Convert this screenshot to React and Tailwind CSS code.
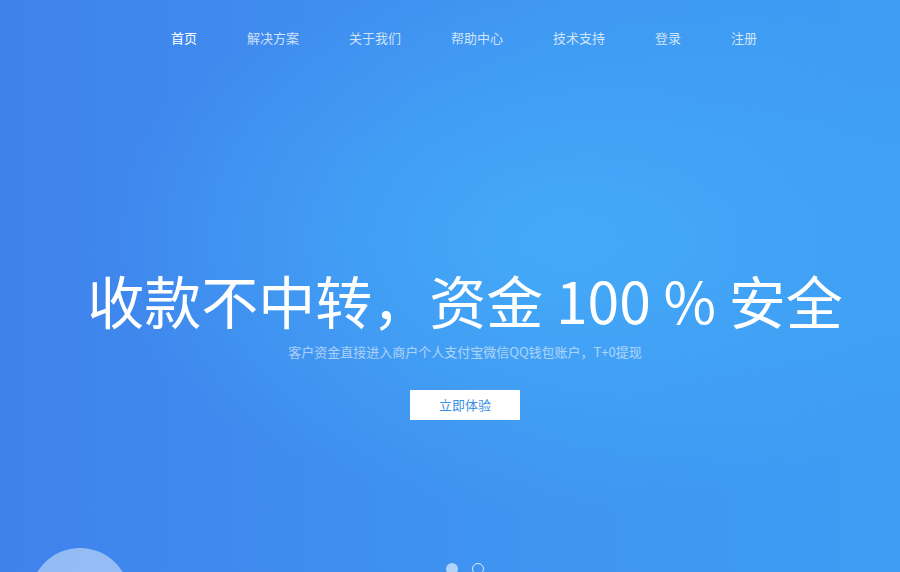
import React from "react";

const nav = ["首页", "解决方案", "关于我们", "帮助中心", "技术支持", "登录", "注册"];

export default function App() {
  return (
    <div
      className="relative h-[572px] w-full overflow-hidden bg-[#3f8cef] bg-[image:radial-gradient(ellipse_at_63%_42%,#44aaf8_0%,rgba(66,160,245,0)_58%),linear-gradient(to_right,#3f82ec,#3f95f1_60%,#3e9df3)]"
      style={{ fontFamily: '"Noto Sans CJK SC", "Noto Sans", sans-serif' }}
    >
      <div className="flex flex-col items-center pl-[28px]">
        <nav className="flex gap-[50px] pt-[29px] text-[13px] leading-[18px]">
          {nav.map((item, i) => (
            <a
              key={item}
              href="#"
              className={i === 0 ? "text-white" : "text-white/75"}
            >
              {item}
            </a>
          ))}
        </nav>

        <h1 className="mt-[224px] whitespace-nowrap pl-[2px] text-[57px] font-normal leading-[56px] text-white">
          收款不中转，资金 100 % 安全
        </h1>
        <p className="mt-[15px] pl-[2px] text-[13px] leading-[20px] text-white/55">
          客户资金直接进入商户个人支付宝微信QQ钱包账户，T+0提现
        </p>
        <button className="mt-[28px] ml-[2px] h-[30px] w-[110px] bg-white text-[13px] text-[#3a8fe6]">
          立即体验
        </button>
      </div>

      {/* decorative bubble */}
      <div className="absolute left-[30px] top-[548px] h-[100px] w-[100px] rounded-full bg-white/45" />

      {/* carousel dots */}
      <div className="absolute left-[446px] top-[563px] h-[12px] w-[12px] rounded-full bg-white/60" />
      <div className="absolute left-[472px] top-[563px] h-[12px] w-[12px] rounded-full border border-white/80" />
    </div>
  );
}
